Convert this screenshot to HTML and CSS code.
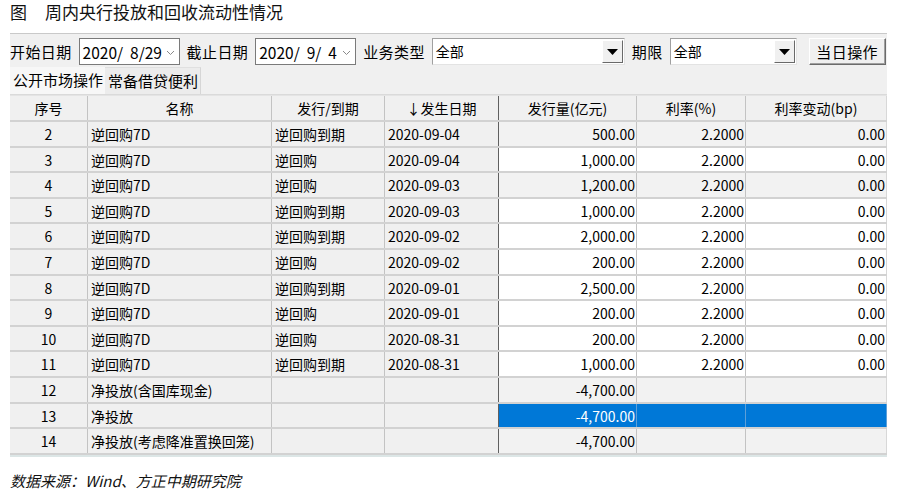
FILE: index.html
```html
<!DOCTYPE html>
<html lang="zh-CN">
<head>
<meta charset="utf-8">
<title>周内央行投放和回收流动性情况</title>
<link rel="stylesheet" href="styles.css">
</head>
<body>
<div class="title"><span class="fig">图</span><span>周内央行投放和回收流动性情况</span></div>
<div class="frame">
  <div class="toolbar">
    <span class="lbl">开始日期</span>
    <div class="date"><span>2020/&nbsp; 8/29</span><svg class="chev" width="9" height="6" viewBox="0 0 9 6"><polyline points="1,1 4.5,4.5 8,1" fill="none" stroke="#8a8a8a" stroke-width="1"/></svg></div>
    <span class="lbl">截止日期</span>
    <div class="date"><span>2020/&nbsp; 9/&nbsp; 4</span><svg class="chev" width="9" height="6" viewBox="0 0 9 6"><polyline points="1,1 4.5,4.5 8,1" fill="none" stroke="#8a8a8a" stroke-width="1"/></svg></div>
    <span class="lbl">业务类型</span>
    <div class="combo combo-wide"><span class="ctext">全部</span><span class="drop"><svg width="11" height="6" viewBox="0 0 11 6"><polygon points="0,0 11,0 5.5,6" fill="#000"/></svg></span></div>
    <span class="lbl">期限</span>
    <div class="combo combo-narrow"><span class="ctext">全部</span><span class="drop"><svg width="11" height="6" viewBox="0 0 11 6"><polygon points="0,0 11,0 5.5,6" fill="#000"/></svg></span></div>
    <button class="btn">当日操作</button>
  </div>
  <div class="tabs">
    <span class="tab active">公开市场操作</span>
    <span class="tab">常备借贷便利</span>
  </div>
  <div class="grid">
    <div class="row head">
      <div class="c c1">序号</div><div class="c c2">名称</div><div class="c c3">发行/到期</div><div class="c c4">↓发生日期</div><div class="c c5">发行量(亿元)</div><div class="c c6">利率(%)</div><div class="c c7">利率变动(bp)</div>
    </div>
    <div class="row gray">
      <div class="c c1">2</div><div class="c c2">逆回购7D</div><div class="c c3">逆回购到期</div><div class="c c4">2020-09-04</div><div class="c c5">500.00</div><div class="c c6">2.2000</div><div class="c c7">0.00</div>
    </div>
    <div class="row">
      <div class="c c1">3</div><div class="c c2">逆回购7D</div><div class="c c3">逆回购</div><div class="c c4">2020-09-04</div><div class="c c5">1,000.00</div><div class="c c6">2.2000</div><div class="c c7">0.00</div>
    </div>
    <div class="row gray">
      <div class="c c1">4</div><div class="c c2">逆回购7D</div><div class="c c3">逆回购</div><div class="c c4">2020-09-03</div><div class="c c5">1,200.00</div><div class="c c6">2.2000</div><div class="c c7">0.00</div>
    </div>
    <div class="row">
      <div class="c c1">5</div><div class="c c2">逆回购7D</div><div class="c c3">逆回购到期</div><div class="c c4">2020-09-03</div><div class="c c5">1,000.00</div><div class="c c6">2.2000</div><div class="c c7">0.00</div>
    </div>
    <div class="row">
      <div class="c c1">6</div><div class="c c2">逆回购7D</div><div class="c c3">逆回购到期</div><div class="c c4">2020-09-02</div><div class="c c5">2,000.00</div><div class="c c6">2.2000</div><div class="c c7">0.00</div>
    </div>
    <div class="row">
      <div class="c c1">7</div><div class="c c2">逆回购7D</div><div class="c c3">逆回购</div><div class="c c4">2020-09-02</div><div class="c c5">200.00</div><div class="c c6">2.2000</div><div class="c c7">0.00</div>
    </div>
    <div class="row">
      <div class="c c1">8</div><div class="c c2">逆回购7D</div><div class="c c3">逆回购到期</div><div class="c c4">2020-09-01</div><div class="c c5">2,500.00</div><div class="c c6">2.2000</div><div class="c c7">0.00</div>
    </div>
    <div class="row">
      <div class="c c1">9</div><div class="c c2">逆回购7D</div><div class="c c3">逆回购</div><div class="c c4">2020-09-01</div><div class="c c5">200.00</div><div class="c c6">2.2000</div><div class="c c7">0.00</div>
    </div>
    <div class="row">
      <div class="c c1">10</div><div class="c c2">逆回购7D</div><div class="c c3">逆回购</div><div class="c c4">2020-08-31</div><div class="c c5">200.00</div><div class="c c6">2.2000</div><div class="c c7">0.00</div>
    </div>
    <div class="row">
      <div class="c c1">11</div><div class="c c2">逆回购7D</div><div class="c c3">逆回购到期</div><div class="c c4">2020-08-31</div><div class="c c5">1,000.00</div><div class="c c6">2.2000</div><div class="c c7">0.00</div>
    </div>
    <div class="row gray">
      <div class="c c1">12</div><div class="c c2">净投放(含国库现金)</div><div class="c c3"></div><div class="c c4"></div><div class="c c5">-4,700.00</div><div class="c c6"></div><div class="c c7"></div>
    </div>
    <div class="row selected">
      <div class="c c1">13</div><div class="c c2">净投放</div><div class="c c3"></div><div class="c c4"></div><div class="c c5">-4,700.00</div><div class="c c6"></div><div class="c c7"></div>
    </div>
    <div class="row gray">
      <div class="c c1">14</div><div class="c c2">净投放(考虑降准置换回笼)</div><div class="c c3"></div><div class="c c4"></div><div class="c c5">-4,700.00</div><div class="c c6"></div><div class="c c7"></div>
    </div>
  </div>
</div>
<div class="source">数据来源：Wind、方正中期研究院</div>
</body>
</html>
```

FILE: styles.css
```css
* { box-sizing: border-box; }
html, body { margin: 0; padding: 0; background: #fff; }
body {
  font-family: "Microsoft YaHei", "Noto Sans CJK SC", "Noto Sans", sans-serif;
  color: #000;
  width: 903px;
  height: 492px;
  overflow: hidden;
}
.title {
  height: 33px;
  padding: 0 0 0 10px;
  font-size: 17px;
  line-height: 24px;
  color: #111;
}
.title .fig { margin-right: 18px; }

.frame {
  margin-left: 10px;
  width: 877px;
  background: #f0f0f0;
}
.toolbar {
  display: flex;
  align-items: center;
  gap: 7px;
  height: 33px;
  border-top: 1px solid #c9c9c9;
  padding-top: 3px;
  font-size: 15px;
}
.lbl { line-height: 27px; white-space: nowrap; letter-spacing: 0.4px; }
.date {
  width: 101px;
  height: 27px;
  background: #fff;
  border: 1px solid #7a7a7a;
  display: flex;
  align-items: center;
  padding-left: 3px;
  font-size: 15.5px;
  white-space: nowrap;
}
.date span { flex: 1; }
.date .chev { margin-right: 4px; margin-top: 2px; }
.combo {
  height: 27px;
  background: #fff;
  border: 1px solid #a0a0a0;
  border-right-color: #e3e3e3;
  border-bottom-color: #e3e3e3;
  display: flex;
  align-items: stretch;
}
.combo-wide { width: 193px; }
.combo-narrow { width: 127px; }
.ctext { flex: 1; padding-left: 3px; line-height: 24px; font-size: 14px; }
.drop {
  width: 21px;
  margin: 1px;
  background: #f0f0f0;
  border: 1px solid #fff;
  border-right-color: #696969;
  border-bottom-color: #696969;
  display: flex;
  align-items: center;
  justify-content: center;
}
.btn {
  margin-left: 5px;
  width: 77px;
  height: 27px;
  background: #f0f0f0;
  border: 1px solid #fff;
  border-right-color: #6b6b6b;
  border-bottom-color: #6b6b6b;
  box-shadow: inset -1px -1px 0 #a0a0a0;
  font-family: inherit;
  font-size: 15px;
  color: #000;
  padding: 0;
  letter-spacing: 0.4px;
}

.tabs {
  display: flex;
  height: 29px;
  padding-top: 1px;
  border-bottom: 1px solid #dadada;
  font-size: 15px;
}
.tab {
  padding: 0 2px 0 3px;
  line-height: 26px;
  white-space: nowrap;
}
.tab.active { background: #f7f7f7; }
.tab + .tab {
  background: #ececec;
  border-top: 1px solid #e0e0e0;
  border-right: 1px solid #d6d6d6;
}

.grid {
  border-top: 1px solid #e4e4e4;
  background: #f0f0f0;
  border-bottom: 2px solid #dce6e6;
}
.row {
  display: grid;
  grid-template-columns: 78px 184px 113px 114px 138px 109px 141px;
  height: 25.6px;
  border-bottom: 2px solid #d2d2d2;
  font-size: 14px;
}
.row.head { height: 26px; }
.c {
  border-right: 1px solid #c3c3c3;
  padding-top: 2px;
  line-height: 21px;
  white-space: nowrap;
  overflow: hidden;
  background: #f0f0f0;
}
.c4 { border-right-color: #606060; }
.c7 { border-right-color: #d8d8d8; }
.c1 { text-align: center; }
.c2, .c3, .c4 { padding-left: 3px; }
.c5, .c6, .c7 { text-align: right; padding-right: 1px; background: #fff; }
.head .c { text-align: center; padding: 2px 0 0; background: #f0f0f0; line-height: 21px; }
.row.gray .c5, .row.gray .c6, .row.gray .c7 { background: #f2f2f2; }
.row.selected .c5, .row.selected .c6, .row.selected .c7 {
  background: #0078d7;
  color: #fff;
  border-right-color: #5d9fd8;
}

.source {
  margin-top: 13px;
  padding-left: 10px;
  font-size: 15px;
  font-style: italic;
  color: #111;
  line-height: 22px;
}
```
